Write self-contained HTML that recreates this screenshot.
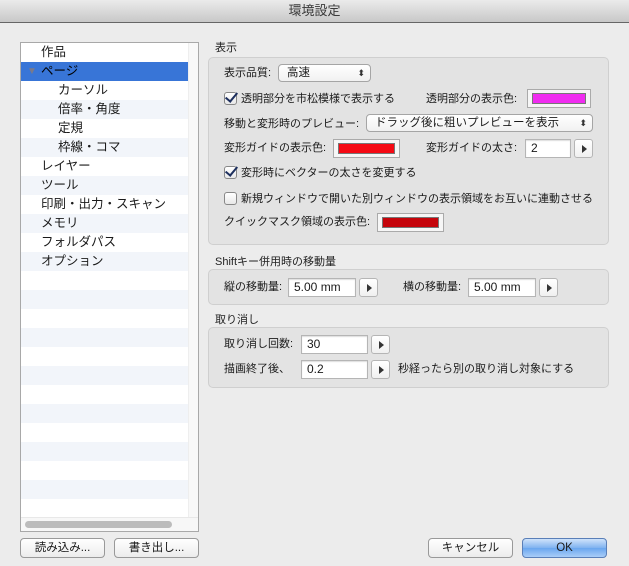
<!DOCTYPE html>
<html><head><meta charset="utf-8"><style>
*{box-sizing:border-box;margin:0;padding:0}
body{width:629px;height:566px;background:#ececec;font-family:"Liberation Sans","Noto Sans CJK JP",sans-serif;font-size:11px;color:#1a1a1a;position:relative;overflow:hidden}
.a{position:absolute;white-space:nowrap}
.t{position:absolute;white-space:nowrap;line-height:14px}
#title{left:0;top:0;width:629px;height:23px;background:linear-gradient(#ebebeb,#c8c8c8);border-bottom:1px solid #666;text-align:center;line-height:22px;font-size:13px;color:#3a3a3a}
#list{left:20px;top:42px;width:179px;height:490px;border:1px solid #a8a8a8;background:#fff;overflow:hidden}
.row{position:absolute;left:0;width:167px;height:19px;line-height:19px;font-size:12.5px}
.s{background:#f2f5fa}
.sel{background:#3875d7;color:#000}
.grp{position:absolute;left:208px;width:401px;background:#e3e3e3;border:1px solid #cfcfcf;border-radius:5px}
.lbl{position:absolute;left:215px;font-size:11px;color:#222}
.btn{position:absolute;height:20px;border:1px solid #999;border-radius:4px;background:linear-gradient(#fff,#ececec);text-align:center;line-height:18px;font-size:11.5px}
.ok{background:linear-gradient(#cfe3fb,#7fb2f0 50%,#6aa6ef 51%,#a9cdf7);border-color:#5a7fb8}
.inp{position:absolute;height:19px;background:#fff;border:1px solid #b5b5b5;line-height:17px;padding-left:5px;font-size:12px;box-shadow:inset 0 1px 1px #ddd}
.arr{position:absolute;width:19px;height:19px;border:1px solid #b5b5b5;border-radius:3px;background:linear-gradient(#fff,#f0f0f0)}
.arr:after{content:"";position:absolute;left:7px;top:5px;border-left:5px solid #333;border-top:4px solid transparent;border-bottom:4px solid transparent}
.sw{position:absolute;height:19px;border:1px solid #aaa;background:#f6f6f6;padding:3px 4px}
.sw div{width:100%;height:100%;border:1px solid #777}
.sel2{position:absolute;height:18px;border:1px solid #a5a5a5;border-radius:4px;background:linear-gradient(#fff,#f1f1f1);line-height:16px;padding-left:8px;font-size:11.5px}
.sel2:after{content:"⬍";position:absolute;right:5px;top:0;font-size:9px;color:#333}
.cb{position:absolute;width:13px;height:13px;border:1px solid #888;border-radius:3px;background:linear-gradient(#fff,#e8e8e8)}
.cb.on:after{content:"";position:absolute;left:3px;top:-3px;width:5px;height:10px;border-right:2.5px solid #1d2f5e;border-bottom:2.5px solid #1d2f5e;transform:rotate(40deg)}
</style></head><body>
<div id="title" class="a">環境設定</div>

<div id="list" class="a">
<div class="row" style="top:0;padding-left:20px">作品</div>
<div class="row sel" style="top:19px;padding-left:20px"><span style="position:absolute;left:6px;top:0;color:#7a7a8a;font-size:10px">▼</span>ページ</div>
<div class="row" style="top:38px;padding-left:37px">カーソル</div>
<div class="row s" style="top:57px;padding-left:37px">倍率・角度</div>
<div class="row" style="top:76px;padding-left:37px">定規</div>
<div class="row s" style="top:95px;padding-left:37px">枠線・コマ</div>
<div class="row" style="top:114px;padding-left:20px">レイヤー</div>
<div class="row s" style="top:133px;padding-left:20px">ツール</div>
<div class="row" style="top:152px;padding-left:20px">印刷・出力・スキャン</div>
<div class="row s" style="top:171px;padding-left:20px">メモリ</div>
<div class="row" style="top:190px;padding-left:20px">フォルダパス</div>
<div class="row s" style="top:209px;padding-left:20px">オプション</div>
<div class="row s" style="top:247px"></div>
<div class="row s" style="top:285px"></div>
<div class="row s" style="top:323px"></div>
<div class="row s" style="top:361px"></div>
<div class="row s" style="top:399px"></div>
<div class="row s" style="top:437px"></div>
<div class="a" style="left:167px;top:0;width:10px;height:488px;background:#f8f8f8;border-left:1px solid #eee"></div>
<div class="a" style="left:0;top:474px;width:177px;height:14px;background:#f7f7f7;border-top:1px solid #e8e8e8"></div>
<div class="a" style="left:4px;top:478px;width:147px;height:7px;background:#bcbcbc;border-radius:4px"></div>
</div>

<div class="btn" style="left:20px;top:538px;width:85px">読み込み...</div>
<div class="btn" style="left:114px;top:538px;width:85px">書き出し...</div>
<div class="btn" style="left:428px;top:538px;width:85px">キャンセル</div>
<div class="btn ok" style="left:522px;top:538px;width:85px">OK</div>

<div class="lbl t" style="top:41px">表示</div>
<div class="grp" style="top:57px;height:188px"></div>
<div class="t" style="left:224px;top:66px">表示品質:</div>
<div class="sel2" style="left:278px;top:64px;width:93px">高速</div>
<div class="cb on" style="left:224px;top:92px"></div>
<div class="t" style="left:241px;top:92px">透明部分を市松模様で表示する</div>
<div class="t" style="left:426px;top:92px">透明部分の表示色:</div>
<div class="sw" style="left:527px;top:89px;width:64px"><div style="background:#f02cf0"></div></div>
<div class="t" style="left:224px;top:117px">移動と変形時のプレビュー:</div>
<div class="sel2" style="left:366px;top:114px;width:227px">ドラッグ後に粗いプレビューを表示</div>
<div class="t" style="left:224px;top:141px">変形ガイドの表示色:</div>
<div class="sw" style="left:333px;top:139px;width:67px"><div style="background:#f50a14"></div></div>
<div class="t" style="left:426px;top:141px">変形ガイドの太さ:</div>
<div class="inp" style="left:525px;top:139px;width:46px">2</div>
<div class="arr" style="left:574px;top:139px"></div>
<div class="cb on" style="left:224px;top:166px"></div>
<div class="t" style="left:241px;top:166px">変形時にベクターの太さを変更する</div>
<div class="cb" style="left:224px;top:192px"></div>
<div class="t" style="left:241px;top:192px">新規ウィンドウで開いた別ウィンドウの表示領域をお互いに連動させる</div>
<div class="t" style="left:224px;top:215px">クイックマスク領域の表示色:</div>
<div class="sw" style="left:377px;top:213px;width:67px"><div style="background:#c5050c"></div></div>

<div class="lbl t" style="top:255px">Shiftキー併用時の移動量</div>
<div class="grp" style="top:269px;height:36px"></div>
<div class="t" style="left:224px;top:280px">縦の移動量:</div>
<div class="inp" style="left:288px;top:278px;width:68px">5.00 mm</div>
<div class="arr" style="left:359px;top:278px"></div>
<div class="t" style="left:403px;top:280px">横の移動量:</div>
<div class="inp" style="left:468px;top:278px;width:68px">5.00 mm</div>
<div class="arr" style="left:539px;top:278px"></div>

<div class="lbl t" style="top:313px">取り消し</div>
<div class="grp" style="top:327px;height:61px"></div>
<div class="t" style="left:224px;top:337px">取り消し回数:</div>
<div class="inp" style="left:301px;top:335px;width:67px">30</div>
<div class="arr" style="left:371px;top:335px"></div>
<div class="t" style="left:224px;top:362px">描画終了後、</div>
<div class="inp" style="left:301px;top:360px;width:67px">0.2</div>
<div class="arr" style="left:371px;top:360px"></div>
<div class="t" style="left:398px;top:362px">秒経ったら別の取り消し対象にする</div>
</body></html>
